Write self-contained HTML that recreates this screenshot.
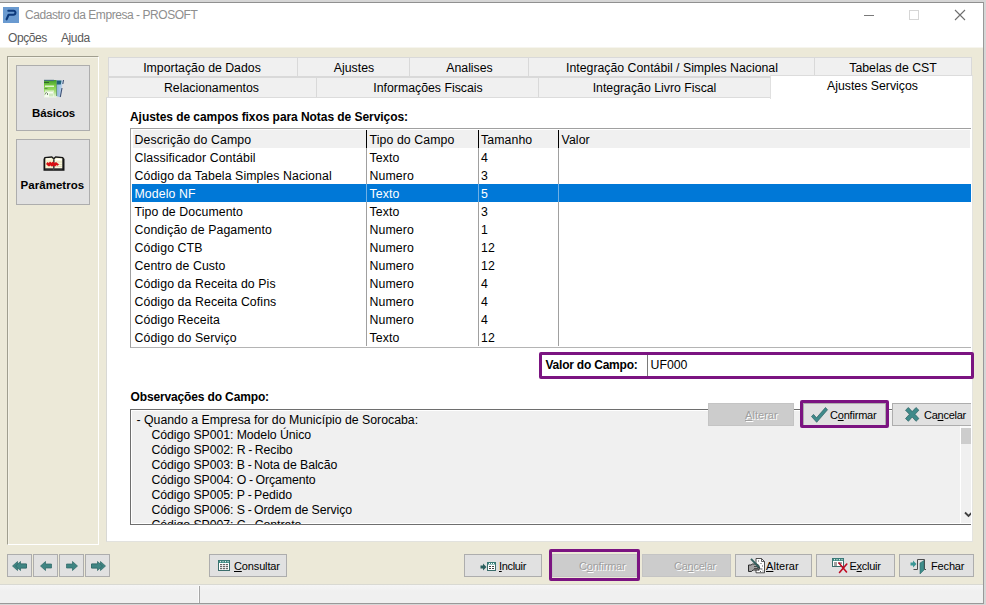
<!DOCTYPE html>
<html><head><meta charset="utf-8">
<style>
*{box-sizing:border-box;margin:0;padding:0}
html,body{width:986px;height:605px;overflow:hidden;background:#d6d6d6;font-family:"Liberation Sans",sans-serif;font-size:12.3px;color:#000}
div,span,svg{position:absolute}
span{white-space:nowrap}
#win{left:0;top:2px;width:984px;height:602px;background:#ece9d8;border-top:1px solid #909090;border-right:1px solid #999;border-bottom:1px solid #999}
#title{left:0;top:3px;width:983px;height:25px;background:#fff}
#menu{left:0;top:28px;width:983px;height:19px;background:#fff}
#menu span{top:3px;font-size:12px;color:#5a5a5a;letter-spacing:-0.4px}
.tab{height:20px;background:#f0f0f0;border:1px solid #d9d9d9;border-right:none;text-align:center;font-size:12.3px;line-height:20px}
.tab span{position:static}
.btn{height:23px;background:#e1e1e1;border:1px solid #adadad;font-size:11px;line-height:22px}
.btn.dis{background:#cccccc;border-color:#c4c4c4;color:#a0a0a0;text-shadow:1px 1px 0 #fff}
.btn span{top:0}
.row{left:132px;width:839px;height:18px;line-height:20px;font-size:12.3px;letter-spacing:0.1px}
.row span{top:0}
.c1{left:2.5px}.c2{left:237.5px}.c3{left:349px}.c4{left:429.5px}
.vl{width:1px;background:#a0a0a0}
.obs span{left:21.5px;font-size:12.3px;line-height:15px}
b{font-weight:bold}i{font-style:normal;letter-spacing:-0.55px;position:static}
</style></head><body>
<div id="win"></div>
<!-- title bar -->
<div id="title">
 <svg style="left:3px;top:4px" width="16" height="16" viewBox="0 0 16 16"><rect width="16" height="16" fill="#6a9ad0"/><path d="M5.300 3.700H10.600C13.100 3.700 13.100 7.700 10.300 7.800H5.600L3.600 12.300" fill="none" stroke="#0c397b" stroke-width="2.100" stroke-linecap="round" stroke-linejoin="round"/></svg>
 <span style="left:25px;top:5px;font-size:12px;color:#8e8e8e;letter-spacing:-0.45px">Cadastro da Empresa - PROSOFT</span>
 <svg style="left:860px;top:5px" width="110" height="16" viewBox="0 0 110 16">
  <path d="M4 7.500H14" stroke="#7a7a7a" stroke-width="1"/>
  <rect x="49.500" y="2.500" width="9" height="9" fill="none" stroke="#d6d6d6" stroke-width="1"/>
  <path d="M95 2L105 12M105 2L95 12" stroke="#6e6e6e" stroke-width="1.100"/>
 </svg>
</div>
<div id="menu"><span style="left:8px">Opções</span><span style="left:61px">Ajuda</span></div>
<div style="left:0;top:47px;width:983px;height:1px;background:#f6f5ee"></div>

<!-- left panel -->
<div style="left:7px;top:56px;width:92px;height:489px;border:1px solid #a09e8f;border-right-color:#fff;border-bottom-color:#fff;box-shadow:inset 1px 1px 0 #f4f2e6"></div>
<div class="btn" style="left:16px;top:65px;width:74px;height:66px"></div>
<div class="btn" style="left:16px;top:139px;width:74px;height:66px"></div>
<span style="left:32px;top:107px;font-size:11.5px;font-weight:bold;letter-spacing:-0.15px">Básicos</span>
<span style="letter-spacing:-0.07px;left:20.500px;top:179px;font-size:11.5px;font-weight:bold;letter-spacing:0.05px">Parâmetros</span>

<svg style="left:43px;top:79px" width="22" height="20" viewBox="0 0 22 20">
<defs><linearGradient id="gg" x1="0" y1="0" x2="0" y2="1"><stop offset="0" stop-color="#3f9a2c"/><stop offset="0.350" stop-color="#7fcf45"/><stop offset="0.650" stop-color="#a6dd78"/><stop offset="1" stop-color="#eef8e6"/></linearGradient>
<linearGradient id="gb" x1="0" y1="0" x2="1" y2="0"><stop offset="0" stop-color="#8fb2d8"/><stop offset="1" stop-color="#c4dcf2"/></linearGradient></defs>
<rect x="1" y="1" width="12.500" height="17.500" fill="url(#gg)"/>
<rect x="1" y="0.800" width="10" height="1.200" fill="#46707c"/>
<rect x="1" y="3" width="5" height="1" fill="#2f6a2a"/>
<rect x="2" y="6.500" width="9" height="1.500" fill="#dff3cf"/>
<rect x="1.500" y="9" width="3" height="1" fill="#5c9a4a"/>
<rect x="2" y="11.500" width="9" height="1.300" fill="#e6f6da"/>
<rect x="1.500" y="13" width="9" height="5" fill="#f6fbf1"/>
<path d="M2 15.500l1.500-2.500M4.500 14v2" stroke="#55704a" stroke-width="0.800"/>
<path d="M6 14.500h4v3h-4z" fill="#cfe8c0"/>
<path d="M13.500 1.500H20L17.500 18.500L13.500 17Z" fill="url(#gb)"/>
<path d="M13.500 1.500H18.500L17.800 5.500H13.500Z" fill="#1f6078"/>
<path d="M20.500 1L19.800 5M19 9L17.300 18" stroke="#3d4f73" stroke-width="1.100"/>
<path d="M13.500 1.500V17" stroke="#5f9a58" stroke-width="0.800"/>
</svg>
<svg style="left:43px;top:156px" width="22" height="15" viewBox="0 0 22 15">
<path d="M0.500 3L1.500 1L9 0.300L10.700 1.800L12.500 0.300L20 1L21.500 3V14.800H0.500Z" fill="#141414"/>
<path d="M2.300 2.300L8.800 1.800L10.200 3.200V12.300H2.300Z" fill="#f5f2cf"/>
<path d="M11.400 3.200L12.800 1.800L19.300 2.300V12.300H11.400Z" fill="#f8f6dd"/>
<path d="M3 3h5M12.500 3.500h6" stroke="#fff" stroke-width="1"/>
<path d="M13 6h6M13 8.500h6M13 10.500h6" stroke="#d8d4a8" stroke-width="0.700"/>
<path d="M10.800 2.500V13" stroke="#555" stroke-width="0.800"/>
<path d="M2.300 12.800H10L10.800 13.500L11.600 12.800H19.300" stroke="#777" stroke-width="0.800" fill="none"/>
<path d="M3 8L4.500 6L5.800 7L7 5.500L8.500 6.800L10 5.500L11.500 7L13 6L14.500 7.200L16 8.300L14.800 9.800L13.300 9.300L12 10.800L10.500 9.500L9 10.800L7.500 9.500L6 10.500L4.500 9.500Z" fill="#d90f12"/>
</svg>
<!-- tabs -->
<div id="tabs">
<div class="tab" style="left:108px;top:57px;width:190px;padding-right:3px">Importação de Dados</div>
<div class="tab" style="left:297px;top:57px;width:113px">Ajustes</div>
<div class="tab" style="left:409px;top:57px;width:120px">Analises</div>
<div class="tab" style="left:528px;top:57px;width:287px">Integração Contábil / Simples Nacional</div>
<div class="tab" style="left:814px;top:57px;width:158px;border-right:1px solid #d9d9d9">Tabelas de CST</div>
<div class="tab" style="left:108px;top:77px;width:209px;height:21px;line-height:20px;padding-right:3px">Relacionamentos</div>
<div class="tab" style="left:316px;top:77px;width:223px;height:21px;line-height:20px">Informações Fiscais</div>
<div class="tab" style="left:538px;top:77px;width:233px;height:21px;line-height:20px;border-right:1px solid #d9d9d9">Integração Livro Fiscal</div>
</div>
<!-- content panel -->
<div style="left:106px;top:97px;width:867px;height:445px;background:#fff;border-left:1px solid #d8d8d4;border-top:1px solid #dcdcdc;border-bottom:1px solid #e2e2de;border-right:1px solid #e4e4e0"></div>
<div style="left:770px;top:75px;width:203px;height:24px;background:#fff;border-top:1px solid #dcdcdc;border-left:1px solid #e0e0e0;border-right:1px solid #e4e4e0"></div>
<span style="left:827px;top:79px;font-size:12.3px">Ajustes Serviços</span>
<span style="left:130px;top:110px;font-size:12px;font-weight:bold;letter-spacing:-0.06px">Ajustes de campos fixos para Notas de Serviços:</span>
<!-- table -->
<div style="left:130px;top:128px;width:841px;height:220px;background:#fff;border:1px solid #a0a0a0;border-right:none;border-bottom-color:#b4b4b4"></div>
<div style="left:133px;top:130px;width:837px;height:18px;background:#f0f0f0"></div>
<div class="row" style="top:129px;height:19px;line-height:22px"><span class="c1">Descrição do Campo</span><span class="c2">Tipo do Campo</span><span class="c3">Tamanho</span><span class="c4">Valor</span></div>
<div class="row" style="top:148px"><span class="c1">Classificador Contábil</span><span class="c2">Texto</span><span class="c3">4</span><span class="c4"></span></div>
<div class="row" style="top:166px"><span class="c1">Código da Tabela Simples Nacional</span><span class="c2">Numero</span><span class="c3">3</span><span class="c4"></span></div>
<div class="row" style="top:184px;background:#0078d7;color:#fff"><span class="c1">Modelo NF</span><span class="c2">Texto</span><span class="c3">5</span><span class="c4"></span></div>
<div class="row" style="top:202px"><span class="c1">Tipo de Documento</span><span class="c2">Texto</span><span class="c3">3</span><span class="c4"></span></div>
<div class="row" style="top:220px"><span class="c1">Condição de Pagamento</span><span class="c2">Numero</span><span class="c3">1</span><span class="c4"></span></div>
<div class="row" style="top:238px"><span class="c1">Código CTB</span><span class="c2">Numero</span><span class="c3">12</span><span class="c4"></span></div>
<div class="row" style="top:256px"><span class="c1">Centro de Custo</span><span class="c2">Numero</span><span class="c3">12</span><span class="c4"></span></div>
<div class="row" style="top:274px"><span class="c1">Código da Receita do Pis</span><span class="c2">Numero</span><span class="c3">4</span><span class="c4"></span></div>
<div class="row" style="top:292px"><span class="c1">Código da Receita Cofins</span><span class="c2">Numero</span><span class="c3">4</span><span class="c4"></span></div>
<div class="row" style="top:310px"><span class="c1">Código Receita</span><span class="c2">Numero</span><span class="c3">4</span><span class="c4"></span></div>
<div class="row" style="top:328px"><span class="c1">Código do Serviço</span><span class="c2">Texto</span><span class="c3">12</span><span class="c4"></span></div>
<div class="vl" style="left:366px;top:148px;height:198px"></div>
<div class="vl" style="left:366px;top:130px;height:18px;background:#000;width:1.5px;margin-left:-0.5px"></div>
<div class="vl" style="left:366px;top:184px;height:18px;background:#6fb0e6"></div>
<div class="vl" style="left:478px;top:148px;height:198px"></div>
<div class="vl" style="left:478px;top:130px;height:18px;background:#000;width:1.5px;margin-left:-0.5px"></div>
<div class="vl" style="left:478px;top:184px;height:18px;background:#6fb0e6"></div>
<div class="vl" style="left:558px;top:148px;height:198px"></div>
<div class="vl" style="left:558px;top:130px;height:18px;background:#000;width:1.5px;margin-left:-0.5px"></div>
<div class="vl" style="left:558px;top:184px;height:18px;background:#6fb0e6"></div>
<!-- valor do campo -->
<span style="left:545.500px;top:358px;font-size:12px;font-weight:bold;letter-spacing:-0.22px">Valor do Campo:</span>
<div style="left:647px;top:355px;width:324px;height:21px;background:#fff;border-left:1px solid #7a7a7a"></div>
<span style="left:650.500px;top:358px;font-size:12.300px">UF000</span>
<div style="left:539px;top:352px;width:435px;height:27px;border:3px solid #7b1481;border-radius:2px"></div>
<!-- observacoes -->
<span style="left:130.500px;top:390px;font-size:12px;font-weight:bold;letter-spacing:-0.14px">Observações do Campo:</span>
<div class="obs" style="left:130px;top:409px;width:841px;height:116px;background:#f0f0f0;border:1px solid #6e6e6e;border-right:none;box-shadow:inset 1px 1px 0 #fff, inset 0 -1px 0 #fff;overflow:hidden">
<span style="left:5.5px;top:3px">- Quando a Empresa for do Município de Sorocaba:</span>
<span style="letter-spacing:-0.07px;left:20.500px;top:18px">Código SP001: Modelo Único</span>
<span style="letter-spacing:-0.07px;left:20.500px;top:33px">Código SP002: R<i> - </i>Recibo</span>
<span style="letter-spacing:-0.07px;left:20.500px;top:48px">Código SP003: B<i> - </i>Nota de Balcão</span>
<span style="letter-spacing:-0.07px;left:20.500px;top:63px">Código SP004: O<i> - </i>Orçamento</span>
<span style="letter-spacing:-0.07px;left:20.500px;top:78px">Código SP005: P<i> - </i>Pedido</span>
<span style="letter-spacing:-0.07px;left:20.500px;top:93px">Código SP006: S<i> - </i>Ordem de Serviço</span>
<span style="letter-spacing:-0.07px;left:20.500px;top:108px">Código SP007: C<i> - </i>Contrato</span>
<div style="left:829px;top:0;width:1px;height:114px;background:#fff"></div>
<div style="left:830px;top:16px;width:10px;height:2px;background:#fafafa"></div>
<div style="left:830px;top:18px;width:10px;height:16px;background:#cdcdcd"></div>
<svg style="left:833px;top:101px" width="8" height="8" viewBox="0 0 8 8"><path d="M1 1.500L4.500 5L8 1.500" fill="none" stroke="#404040" stroke-width="1.800"/></svg>
</div>
<div class="btn dis" style="left:708px;top:403px;width:86px"><span style="left:36px;letter-spacing:0.05px"><u>A</u>lterar</span></div>
<div class="btn" style="left:803px;top:403px;width:83px">
<svg style="left:6.500px;top:2.500px" width="18" height="17" viewBox="0 0 18 17"><path d="M0.500 9.500L2.500 7.400L5.500 10.800L14.500 0.500L16.500 2.800L5.700 15.300Z" fill="#3f8a8a" stroke="#2b5f62" stroke-width="0.700" stroke-linejoin="round"/></svg>
<span style="left:26px;letter-spacing:-0.2px">C<u>o</u>nfirmar</span></div>
<div style="left:800px;top:400px;width:89px;height:28px;border:3px solid #7b1481;border-radius:2px"></div>
<div class="btn" style="left:892px;top:403px;width:79px;border-right:none">
<svg style="left:12px;top:3px" width="15" height="15" viewBox="0 0 15 15"><path d="M0.500 3.200L3.400 0.500L7.200 4.600L11 0.500L13.900 3.200L10 7.300L13.900 11.600L11 14.300L7.200 10L3.400 14.300L0.500 11.600L4.400 7.300Z" fill="#3f8a8a" stroke="#2b5f62" stroke-width="0.700" stroke-linejoin="round"/></svg>
<span style="left:31px;letter-spacing:-0.25px">Ca<u>n</u>celar</span></div>
<!-- bottom bar -->
<div class="btn" style="left:7px;top:554px;width:25px"><svg style="left:3.500px;top:5.500px" width="16" height="10" viewBox="0 0 16 10"><path d="M0.5 5L5.5 0.5V3H14.5V7H5.5V9.5Z" fill="#3f8583" stroke="#2f6867" stroke-width="0.700"/><path d="M3.500 5L8.500 0.500V3H14.500V7H8.500V9.500Z" fill="#3f8583" stroke="#2f6867" stroke-width="0.700"/></svg></div>
<div class="btn" style="left:33px;top:554px;width:25px"><svg style="left:5.500px;top:5.500px" width="13" height="10" viewBox="0 0 13 10"><path d="M0.5 5L5.5 0.5V3H11.5V7H5.5V9.5Z" fill="#3f8583" stroke="#2f6867" stroke-width="0.700"/></svg></div>
<div class="btn" style="left:59px;top:554px;width:25px"><svg style="left:5.500px;top:5.500px" width="13" height="10" viewBox="0 0 13 10"><path d="M11.5 5L6.5 0.5V3H0.5V7H6.5V9.5Z" fill="#3f8583" stroke="#2f6867" stroke-width="0.700"/></svg></div>
<div class="btn" style="left:85px;top:554px;width:25px"><svg style="left:4.500px;top:5.500px" width="16" height="10" viewBox="0 0 16 10"><path d="M14.5 5L9.5 0.5V3H0.5V7H9.5V9.5Z" fill="#3f8583" stroke="#2f6867" stroke-width="0.700"/><path d="M11.500 5L6.500 0.500V3H0.500V7H6.500V9.500Z" fill="#3f8583" stroke="#2f6867" stroke-width="0.700"/></svg></div>
<div class="btn" style="left:209px;top:554px;width:78px"><svg style="left:8px;top:5px" width="12" height="11" viewBox="0 0 12 11"><rect x="0.5" y="0.5" width="11" height="10" fill="#fff" stroke="#3b6d6b"/><rect x="0.5" y="0.5" width="11" height="2.5" fill="#3f8a83"/><path d="M2 1.700h1M4.500 1.700h1M7 1.700h1M9.500 1.700h1" stroke="#fff" stroke-width="1"/><path d="M2 4.700h8M2 6.700h8M2 8.700h8" stroke="#444" stroke-width="1" stroke-dasharray="2.200 0.700"/></svg><span style="left:24px;letter-spacing:-0.14px"><u>C</u>onsultar</span></div>
<div class="btn" style="left:464px;top:554px;width:78px">
<svg style="left:14.500px;top:7.500px" width="7" height="8" viewBox="0 0 7 8"><path d="M0.500 2.500H3V0.500L6.500 4L3 7.500V5.500H0.500Z" fill="#2b5f5e"/></svg>
<svg style="left:22px;top:7px" width="9" height="9" viewBox="0 0 9 9"><rect x="0.500" y="0.500" width="8" height="8" fill="#fff" stroke="#3b6d6b"/><rect x="0.500" y="0.500" width="8" height="2" fill="#3f8a83"/><path d="M2 1.500h1M4 1.500h1M6 1.500h1" stroke="#fff"/><path d="M2 4.500h2M5 4.500h2M2 6.500h2M5 6.500h2" stroke="#444" stroke-width="1"/></svg>
<span style="left:34px;letter-spacing:-0.33px"><u>I</u>ncluir</span></div>
<div class="btn dis" style="left:552px;top:554px;width:85px"><span style="left:26px;letter-spacing:-0.2px">C<u>o</u>nfirmar</span></div>
<div style="left:549px;top:549px;width:91px;height:32px;border:3px solid #7b1481;border-radius:2px"></div>
<div class="btn dis" style="left:642px;top:554px;width:89px"><span style="left:31px;letter-spacing:-0.25px">Ca<u>n</u>celar</span></div>
<div class="btn" style="left:735px;top:554px;width:77px">
<svg style="left:12px;top:3px" width="17" height="16" viewBox="0 0 17 16"><path d="M8 0.500H13.500L16.500 3.500V14.800H8Z" fill="#fff" stroke="#3a3a3a" stroke-width="0.900"/><path d="M13.500 0.500V3.500H16.500" fill="none" stroke="#3a3a3a" stroke-width="0.800"/><path d="M10 3h1M12.500 5.500h1M14 8h1M10.500 12h1M13 11h1.500M12 13.500h1M14.500 13h1" stroke="#555" stroke-width="1"/><path d="M0.500 7H3L4.500 6H9L11 7.500V9H9.500L11 10.500V12H5L3.500 13.500H0.500Z" fill="#a2a2a2" stroke="#1e1e1e" stroke-width="0.900"/><path d="M6 8.500h4M6 10.500h4" stroke="#333" stroke-width="0.800"/><path d="M3 0.800L11.500 9.800" stroke="#33605e" stroke-width="1.900"/><path d="M11 9.300l1.500 2" stroke="#111" stroke-width="1"/></svg>
<span style="left:30px;letter-spacing:0.05px"><u>A</u>lterar</span></div>
<div class="btn" style="left:816px;top:554px;width:79px">
<svg style="left:15px;top:3px" width="17" height="16" viewBox="0 0 17 16"><rect x="0.500" y="0.500" width="11" height="8" fill="#fff" stroke="#3b6d6b"/><rect x="0.500" y="0.500" width="11" height="2.500" fill="#3f8a83"/><path d="M2 1.700h1M4.500 1.700h1M7 1.700h1M9.500 1.700h1" stroke="#fff"/><path d="M2 5h3M6 5h4M2 7h3" stroke="#444" stroke-width="1"/><path d="M7 5L14.500 14M14.800 6L7.500 14.500" stroke="#c00a22" stroke-width="1.600" stroke-linecap="round"/></svg>
<span style="left:32.500px;letter-spacing:-0.28px">E<u>x</u>cluir</span></div>
<div class="btn" style="left:899px;top:554px;width:75px">
<svg style="left:10px;top:3px" width="18" height="17" viewBox="0 0 18 17"><path d="M0.500 4.500H3V2.500L6.500 6L3 9.500V7.500H0.500Z" fill="#3a9796"/><path d="M3.500 11.500H7.500V1.500H14.500V11.500H16" fill="none" stroke="#4a4a4a" stroke-width="1"/><path d="M10 5L14 2.500V12L10 16Z" fill="#3f8d8b" stroke="#2f6a69" stroke-width="0.600"/></svg>
<span style="left:31px;letter-spacing:-0.15px">Fechar</span></div>
<!-- status bar -->
<div style="left:0;top:584px;width:983px;height:19px;background:linear-gradient(#f5f5f5,#f0f0f0 6px);border-top:1px solid #d9d9d2"></div>
<div style="left:198px;top:586px;width:1px;height:17px;background:#fbfbfb"></div><div style="left:199px;top:586px;width:1px;height:17px;background:#a6a6a6"></div>
</body></html>
